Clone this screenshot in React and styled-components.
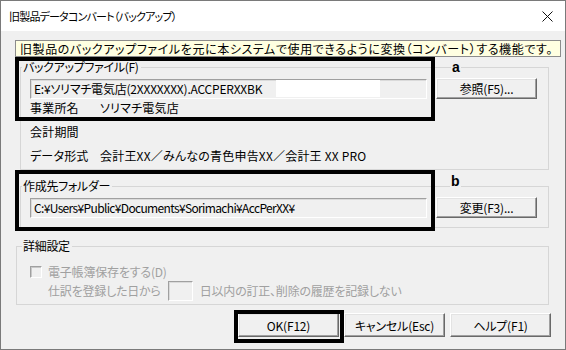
import styled, { createGlobalStyle } from "styled-components";

const FONT = `"Noto Sans CJK JP", "Noto Sans", "Liberation Sans", sans-serif`;

const GlobalStyle = createGlobalStyle`
  html, body {
    margin: 0;
    padding: 0;
    background: #ffffff;
  }
  body {
    font-family: ${FONT};
    font-feature-settings: "palt";
  }
  * {
    box-sizing: border-box;
  }
`;

export default function App() {
  return (
    <>
      <GlobalStyle />
      <Window>
        <TitleBar>
          <Title>旧製品データコンバート（バックアップ）</Title>
          <CloseBtn aria-label="閉じる">
            <svg width="11" height="11" viewBox="0 0 11 11">
              <path d="M0.5 0.5 L10.5 10.5 M10.5 0.5 L0.5 10.5" stroke="#111" strokeWidth="1" />
            </svg>
          </CloseBtn>
        </TitleBar>

        <Banner>
          旧製品のバックアップファイルを元に本システムで使用できるように変換（コンバート）する機能です。
        </Banner>

        <Group $top={3}>
          <Legend $ml={1}>バックアップファイル(F)</Legend>
          <GroupBody $pt={4} $pb={4}>
            <FieldRow>
              <Edit $ls={-0.2}>
                E:¥ソリマチ電気店(2XXXXXXX).ACCPERXXBK
                <Redact />
              </Edit>
              <Button $w={101} $h={21}>参照(F5)...</Button>
            </FieldRow>
            <InfoList>
              <span>事業所名</span>
              <span>ソリマチ電気店</span>
              <span>会計期間</span>
              <span />
              <span>データ形式</span>
              <span>会計王XX／みんなの青色申告XX／会計王 XX PRO</span>
            </InfoList>
          </GroupBody>
        </Group>

        <Group $top={9}>
          <Legend $ml={1}>作成先フォルダー</Legend>
          <GroupBody $pt={4} $pb={9}>
            <FieldRow>
              <Edit $ls={-0.65}>C:¥Users¥Public¥Documents¥Sorimachi¥AccPerXX¥</Edit>
              <Button $w={101} $h={21}>変更(F3)...</Button>
            </FieldRow>
          </GroupBody>
        </Group>

        <DetailGroup>
          <Legend $ml={5}>詳細設定</Legend>
          <DetailBody>
            <CheckRow>
              <CheckBox />
              <span>電子帳簿保存をする(D)</span>
            </CheckRow>
            <DaysRow>
              <span>仕訳を登録した日から</span>
              <SmallEdit />
              <span>日以内の訂正、削除の履歴を記録しない</span>
            </DaysRow>
          </DetailBody>
        </DetailGroup>

        <Actions>
          <Button $w={101} $h={24}>OK(F12)</Button>
          <Button $w={101} $h={24}>キャンセル(Esc)</Button>
          <Button $w={101} $h={24}>ヘルプ(F1)</Button>
        </Actions>

        {/* 注記の枠 */}
        <Mark style={{ left: 14, top: 56, width: 420, height: 64 }} />
        <Mark style={{ left: 14, top: 169, width: 420, height: 61 }} />
        <Mark style={{ left: 233, top: 309, width: 110, height: 33 }} />
        <Tag style={{ left: 450, top: 59 }}>a</Tag>
        <Tag style={{ left: 449, top: 173 }}>b</Tag>
      </Window>
    </>
  );
}

/* ---------- styles ---------- */
const Window = styled.div`
  position: relative;
  width: 566px;
  height: 350px;
  border: 1px solid #7a7a7a;
  background: #f0f0f0;
  display: flex;
  flex-direction: column;
  font-family: ${FONT};
  font-feature-settings: "palt";
  font-size: 12px;
  color: #000;
  overflow: hidden;
`;

const TitleBar = styled.div`
  height: 30px;
  flex: none;
  background: #ffffff;
  display: flex;
  align-items: center;
  justify-content: space-between;
  padding: 0 9px 0 8px;
`;

const Title = styled.div`
  font-size: 11px;
  letter-spacing: -0.8px;
`;

const CloseBtn = styled.div`
  width: 12px;
  height: 12px;
  display: grid;
  place-items: center;
  margin-right: 3px;
`;

const Banner = styled.div`
  margin: 9px 4px 0 14px;
  height: 17px;
  line-height: 15px;
  padding-left: 4px;
  background: #ffffe1;
  border: 1px solid #8c8c8c;
  white-space: nowrap;
  overflow: hidden;
  letter-spacing: 0.6px;
`;

const Group = styled.fieldset`
  margin: ${(p) => p.$top}px 0 0 19px;
  width: 529px;
  padding: 0;
  border: 1px solid #d6d6d6;
  min-width: 0;
`;

const Legend = styled.legend`
  margin-left: ${(p) => p.$ml}px;
  padding: 0 2px 0 1px;
  line-height: 14px;
  font-size: 12px;
  letter-spacing: -0.3px;
`;

const GroupBody = styled.div`
  padding: ${(p) => p.$pt}px 10px ${(p) => p.$pb}px 9px;
`;

const FieldRow = styled.div`
  display: flex;
  align-items: center;
  gap: 9px;
  height: 21px;
`;

const Edit = styled.div`
  width: 397px;
  height: 20px;
  display: flex;
  align-items: center;
  padding-left: 3px;
  background: #f0f0f0;
  border: 1px solid;
  border-color: #a0a0a0 #ffffff #ffffff #a0a0a0;
  box-shadow: inset 1px 1px 0 #dadada;
  white-space: nowrap;
  letter-spacing: ${(p) => p.$ls}px;
`;

const Redact = styled.span`
  display: inline-block;
  width: 104px;
  height: 17px;
  margin-left: 14px;
  background: #ffffff;
`;

const InfoList = styled.div`
  display: grid;
  grid-template-columns: 70px 1fr;
  grid-auto-rows: 18px;
  row-gap: 6px;
  line-height: 18px;
  letter-spacing: 0.2px;
`;

const Button = styled.div`
  flex: none;
  width: ${(p) => p.$w}px;
  height: ${(p) => p.$h}px;
  display: grid;
  place-items: center;
  background: #f0f0f0;
  border: 1px solid;
  border-color: #ffffff #696969 #696969 #ffffff;
  box-shadow: inset -1px -1px 0 #a0a0a0, inset 1px 1px 0 #e3e3e3;
  font-size: 12px;
  letter-spacing: -0.2px;
  white-space: nowrap;
`;

const DetailGroup = styled.fieldset`
  margin: 11px 0 0 15px;
  width: 533px;
  padding: 0;
  border: 1px solid #d6d6d6;
  min-width: 0;
`;

const DetailBody = styled.div`
  padding: 10px 10px 3px 13px;
  color: #a0a0a0;
  letter-spacing: -0.2px;
`;

const CheckRow = styled.div`
  display: flex;
  align-items: center;
  gap: 6px;
  height: 17px;
`;

const CheckBox = styled.span`
  width: 12px;
  height: 12px;
  background: #f0f0f0;
  border: 1px solid;
  border-color: #a0a0a0 #ffffff #ffffff #a0a0a0;
  box-shadow: inset 1px 1px 0 #c8c8c8;
`;

const DaysRow = styled.div`
  display: flex;
  align-items: center;
  gap: 7px;
  height: 21px;
  padding-left: 18px;
`;

const SmallEdit = styled.span`
  width: 25px;
  height: 20px;
  background: #f0f0f0;
  border: 1px solid;
  border-color: #a0a0a0 #ffffff #ffffff #a0a0a0;
  box-shadow: inset 1px 1px 0 #dadada;
`;

const Actions = styled.div`
  display: flex;
  justify-content: flex-end;
  gap: 5px;
  margin-top: 8px;
  padding-right: 14px;
`;

const Mark = styled.div`
  position: absolute;
  border: 4px solid #000;
  pointer-events: none;
`;

const Tag = styled.div`
  position: absolute;
  font-family: "Liberation Sans", Arial, sans-serif;
  font-weight: 700;
  font-size: 14px;
  line-height: 14px;
  padding: 0 1px;
  background: #f0f0f0;
`;
